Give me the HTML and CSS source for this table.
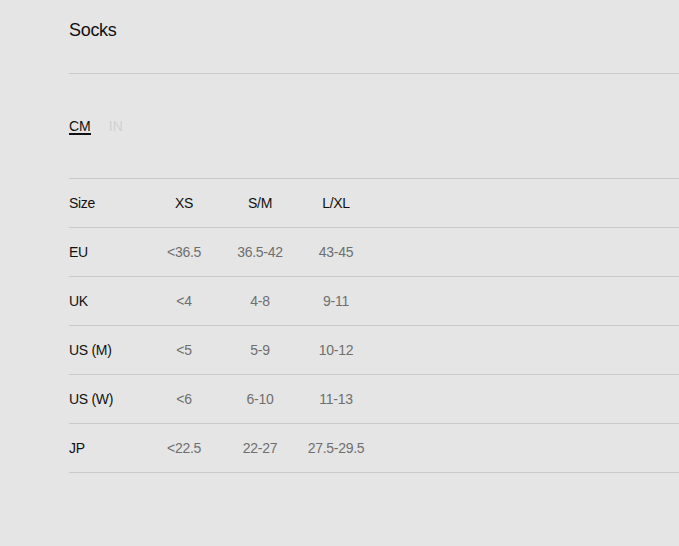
FILE: index.html
```html
<!DOCTYPE html>
<html lang="en">
<head>
  <meta charset="UTF-8" />
  <meta name="viewport" content="width=device-width, initial-scale=1.0" />
  <title>Size Guide - Socks</title>
  <link rel="stylesheet" href="styles.css">
</head>
<body>
  <div class="guide">
    <div class="guide-header">
      <h2>Socks</h2>
    </div>

    <div class="units">
      <a href="#cm" class="unit active">CM</a>
      <a href="#in" class="unit">IN</a>
    </div>

    <div class="size-table">
      <div class="size-row head">
        <div class="label">Size</div>
        <div class="cell">XS</div>
        <div class="cell">S/M</div>
        <div class="cell">L/XL</div>
      </div>
      <div class="size-row">
        <div class="label">EU</div>
        <div class="cell">&lt;36.5</div>
        <div class="cell">36.5-42</div>
        <div class="cell">43-45</div>
      </div>
      <div class="size-row">
        <div class="label">UK</div>
        <div class="cell">&lt;4</div>
        <div class="cell">4-8</div>
        <div class="cell">9-11</div>
      </div>
      <div class="size-row">
        <div class="label">US (M)</div>
        <div class="cell">&lt;5</div>
        <div class="cell">5-9</div>
        <div class="cell">10-12</div>
      </div>
      <div class="size-row">
        <div class="label">US (W)</div>
        <div class="cell">&lt;6</div>
        <div class="cell">6-10</div>
        <div class="cell">11-13</div>
      </div>
      <div class="size-row">
        <div class="label">JP</div>
        <div class="cell">&lt;22.5</div>
        <div class="cell">22-27</div>
        <div class="cell">27.5-29.5</div>
      </div>
    </div>
  </div>
</body>
</html>
```

FILE: styles.css
```css
body {
  margin: 0;
  padding: 0;
  background: #e5e5e5;
  color: #111;
  font-family: "Liberation Sans", Arial, sans-serif;
}

.guide {
  padding-left: 69px;
}

.guide-header {
  padding: 18px 0 31px;
  border-bottom: 1px solid #cacaca;
}

.guide-header h2 {
  margin: 0;
  font-size: 18px;
  line-height: 24px;
  font-weight: normal;
  letter-spacing: -0.3px;
}

.units {
  display: flex;
  align-items: flex-start;
  gap: 18px;
  padding: 45px 0 43px;
  border-bottom: 1px solid #cacaca;
}

.unit {
  font-size: 14px;
  line-height: 14px;
  text-decoration: none;
  color: #d2d2d2;
  border-bottom: 2px solid transparent;
}

.unit.active {
  color: #111;
  border-bottom-color: #111;
}

.size-row {
  display: flex;
  align-items: center;
  height: 48px;
  border-bottom: 1px solid #cacaca;
  font-size: 14px;
  letter-spacing: -0.3px;
}

.label {
  width: 77px;
}

.cell {
  width: 76px;
  text-align: center;
  color: #6f6f6f;
}

.head .cell {
  color: #111;
}
```
